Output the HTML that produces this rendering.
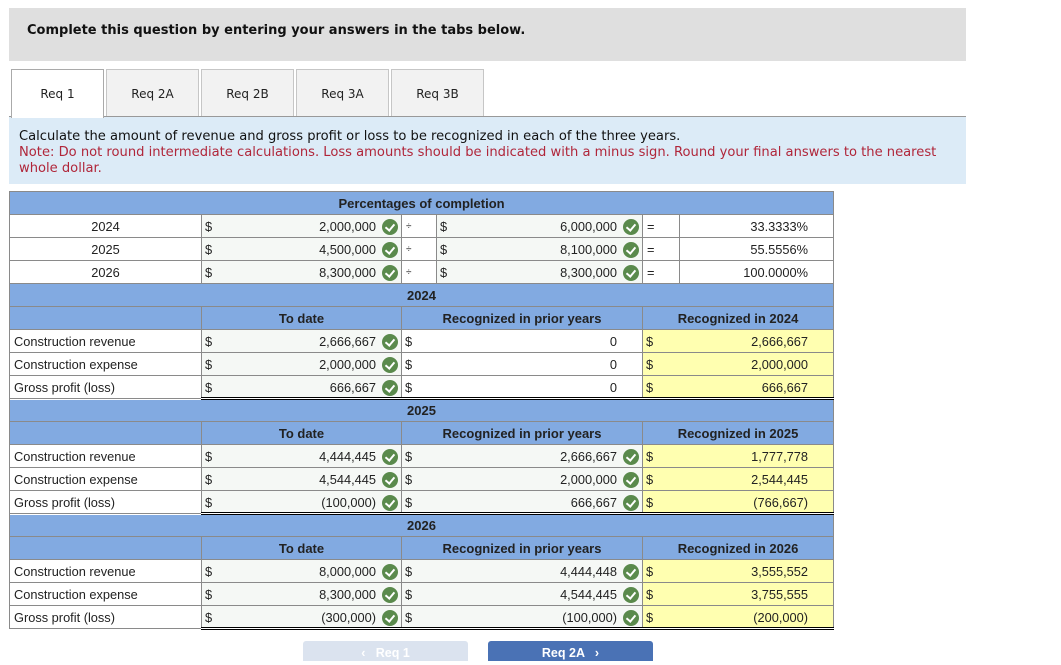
<!DOCTYPE html>
<html><head><meta charset="utf-8"><style>
*{box-sizing:border-box;margin:0;padding:0}
body{width:1061px;height:659px;overflow:hidden;background:#fff;font-family:"Liberation Sans",Arial,sans-serif;position:relative}
.hdr{position:absolute;left:9px;top:8px;width:957px;height:53px;background:#dfdfdf;font-family:"DejaVu Sans",Verdana,sans-serif;font-weight:bold;font-size:13px;padding:15px 0 0 18px;color:#111}
.tab{position:absolute;top:69px;height:48px;width:93px;background:#f2f2f2;border:1px solid #c6c6c6;border-bottom:none;font-family:"DejaVu Sans",Verdana,sans-serif;font-size:12px;text-align:center;line-height:48px;color:#222}
.tab.act{background:#fff;border-color:#aaa;height:49px;z-index:2}
.line{position:absolute;left:9px;top:116px;width:957px;height:1px;background:#999}
.inst{position:absolute;left:9px;top:117px;width:957px;height:67px;background:#dcebf7;font-family:"DejaVu Sans",Verdana,sans-serif;font-size:13.1px;padding:12px 20px 0 10px;line-height:16px;color:#111}
.inst .n{color:#b0263a}
table{position:absolute;left:9px;top:191px;border-collapse:collapse;table-layout:fixed;width:824px;font-size:12.8px;color:#222}
td{height:23px;border:1px solid #8a8a8a;padding:0 4px;white-space:nowrap;position:relative;vertical-align:middle}
tr.b td{background:#82aae1;font-weight:bold;text-align:center;font-size:13px;color:#222}
td.l{background:#fff}
td.c{text-align:center}
td.in{background:#f5f8f5}
td.w{background:#fff}
td.y{background:#ffffb0}
.d{position:absolute;left:3px;top:4px}
.v{position:absolute;right:25px;top:4px}
.vr{position:absolute;right:25px;top:4px}
.ck{position:absolute;right:3px;top:4px;width:16px;height:16px;border-radius:50%;background:#5a8a4c}
.ck:after{content:"";position:absolute;left:5px;top:3px;width:4px;height:7px;border:solid #fff;border-width:0 2px 2px 0;transform:rotate(40deg)}
tr.g td.m{border-top:1.5px solid #000;border-bottom:3px double #000}
.btn{position:absolute;top:641px;height:20px;width:165px;border-radius:3px 3px 0 0;color:#fff;font-size:12.5px;font-weight:bold;text-align:center;line-height:24px}
</style></head><body>
<div class="hdr">Complete this question by entering your answers in the tabs below.</div>
<div class="tab act" style="left:11px">Req 1</div>
<div class="tab" style="left:106px">Req 2A</div>
<div class="tab" style="left:201px">Req 2B</div>
<div class="tab" style="left:296px">Req 3A</div>
<div class="tab" style="left:391px">Req 3B</div>
<div class="line"></div>
<div class="inst">Calculate the amount of revenue and gross profit or loss to be recognized in each of the three years.<br><span class="n">Note: Do not round intermediate calculations. Loss amounts should be indicated with a minus sign. Round your final answers to the nearest whole dollar.</span></div>
<table>
<colgroup><col style="width:192px"><col style="width:200px"><col style="width:35px"><col style="width:206px"><col style="width:37px"><col style="width:154px"></colgroup>
<tr class="b"><td colspan="6">Percentages of completion</td></tr>
<tr><td class="l c">2024</td><td class="in"><span class="d">$</span><span class="v">2,000,000</span><span class="ck"></span></td><td class="w" style="font-size:10px">÷</td><td class="in"><span class="d">$</span><span class="v">6,000,000</span><span class="ck"></span></td><td class="w">=</td><td class="w"><span class="vr">33.3333%</span></td></tr>
<tr><td class="l c">2025</td><td class="in"><span class="d">$</span><span class="v">4,500,000</span><span class="ck"></span></td><td class="w" style="font-size:10px">÷</td><td class="in"><span class="d">$</span><span class="v">8,100,000</span><span class="ck"></span></td><td class="w">=</td><td class="w"><span class="vr">55.5556%</span></td></tr>
<tr><td class="l c">2026</td><td class="in"><span class="d">$</span><span class="v">8,300,000</span><span class="ck"></span></td><td class="w" style="font-size:10px">÷</td><td class="in"><span class="d">$</span><span class="v">8,300,000</span><span class="ck"></span></td><td class="w">=</td><td class="w"><span class="vr">100.0000%</span></td></tr>

<tr class="b"><td colspan="6">2024</td></tr>
<tr class="b"><td></td><td>To date</td><td colspan="2">Recognized in prior years</td><td colspan="2">Recognized in 2024</td></tr>
<tr><td class="l">Construction revenue</td><td class="in"><span class="d">$</span><span class="v">2,666,667</span><span class="ck"></span></td><td colspan="2" class="w"><span class="d">$</span><span class="v">0</span></td><td colspan="2" class="y"><span class="d">$</span><span class="vr">2,666,667</span></td></tr>
<tr><td class="l">Construction expense</td><td class="in"><span class="d">$</span><span class="v">2,000,000</span><span class="ck"></span></td><td colspan="2" class="w"><span class="d">$</span><span class="v">0</span></td><td colspan="2" class="y"><span class="d">$</span><span class="vr">2,000,000</span></td></tr>
<tr class="g"><td class="l">Gross profit (loss)</td><td class="in m"><span class="d">$</span><span class="v">666,667</span><span class="ck"></span></td><td colspan="2" class="w m"><span class="d">$</span><span class="v">0</span></td><td colspan="2" class="y m"><span class="d">$</span><span class="vr">666,667</span></td></tr>

<tr class="b"><td colspan="6">2025</td></tr>
<tr class="b"><td></td><td>To date</td><td colspan="2">Recognized in prior years</td><td colspan="2">Recognized in 2025</td></tr>
<tr><td class="l">Construction revenue</td><td class="in"><span class="d">$</span><span class="v">4,444,445</span><span class="ck"></span></td><td colspan="2" class="in"><span class="d">$</span><span class="v">2,666,667</span><span class="ck"></span></td><td colspan="2" class="y"><span class="d">$</span><span class="vr">1,777,778</span></td></tr>
<tr><td class="l">Construction expense</td><td class="in"><span class="d">$</span><span class="v">4,544,445</span><span class="ck"></span></td><td colspan="2" class="in"><span class="d">$</span><span class="v">2,000,000</span><span class="ck"></span></td><td colspan="2" class="y"><span class="d">$</span><span class="vr">2,544,445</span></td></tr>
<tr class="g"><td class="l">Gross profit (loss)</td><td class="in m"><span class="d">$</span><span class="v">(100,000)</span><span class="ck"></span></td><td colspan="2" class="in m"><span class="d">$</span><span class="v">666,667</span><span class="ck"></span></td><td colspan="2" class="y m"><span class="d">$</span><span class="vr">(766,667)</span></td></tr>

<tr class="b"><td colspan="6">2026</td></tr>
<tr class="b"><td></td><td>To date</td><td colspan="2">Recognized in prior years</td><td colspan="2">Recognized in 2026</td></tr>
<tr><td class="l">Construction revenue</td><td class="in"><span class="d">$</span><span class="v">8,000,000</span><span class="ck"></span></td><td colspan="2" class="in"><span class="d">$</span><span class="v">4,444,448</span><span class="ck"></span></td><td colspan="2" class="y"><span class="d">$</span><span class="vr">3,555,552</span></td></tr>
<tr><td class="l">Construction expense</td><td class="in"><span class="d">$</span><span class="v">8,300,000</span><span class="ck"></span></td><td colspan="2" class="in"><span class="d">$</span><span class="v">4,544,445</span><span class="ck"></span></td><td colspan="2" class="y"><span class="d">$</span><span class="vr">3,755,555</span></td></tr>
<tr class="g"><td class="l">Gross profit (loss)</td><td class="in m"><span class="d">$</span><span class="v">(300,000)</span><span class="ck"></span></td><td colspan="2" class="in m"><span class="d">$</span><span class="v">(100,000)</span><span class="ck"></span></td><td colspan="2" class="y m"><span class="d">$</span><span class="vr">(200,000)</span></td></tr>
</table>
<div class="btn" style="left:303px;background:#dbe3ef">&lsaquo;&nbsp;&nbsp; Req 1</div>
<div class="btn" style="left:488px;background:#4a72b5">Req 2A &nbsp;&nbsp;&rsaquo;</div>
</body></html>
